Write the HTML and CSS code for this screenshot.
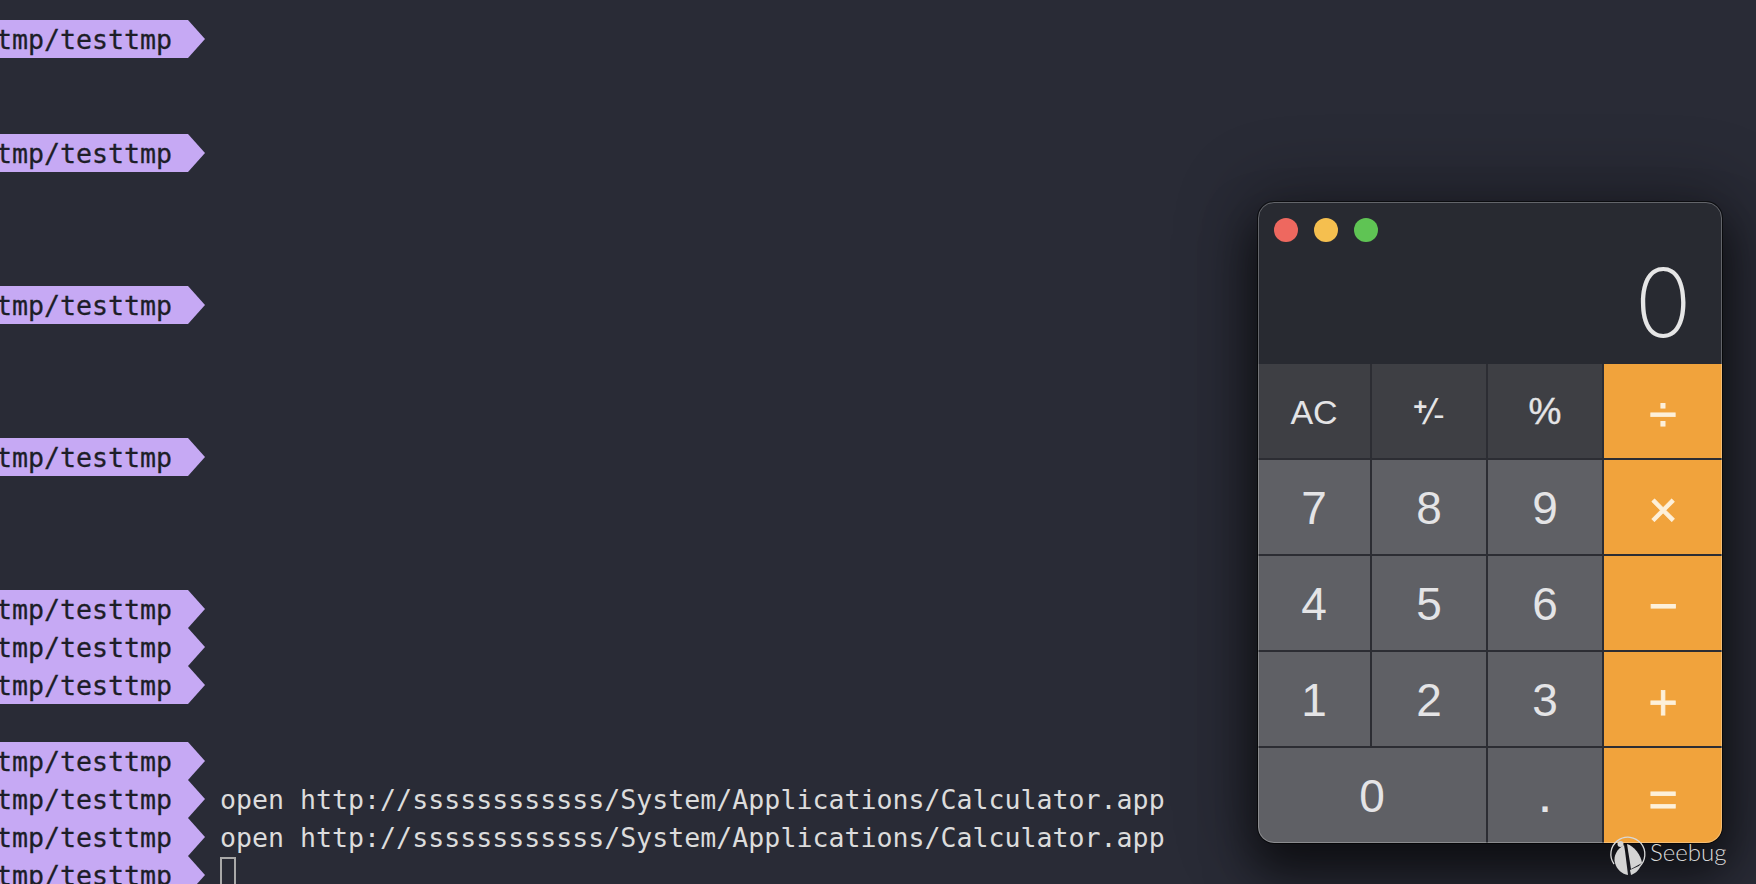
FILE: index.html
```html
<!DOCTYPE html>
<html lang="en">
<head>
<meta charset="utf-8">
<title>Terminal and Calculator</title>
<link rel="stylesheet" href="styles.css">
</head>
<body>
<main class="term">
  <div class="row"><span class="seg"><span class="path">tmp/testtmp</span></span></div>
  <div class="row"></div><div class="row"></div>
  <div class="row"><span class="seg"><span class="path">tmp/testtmp</span></span></div>
  <div class="row"></div><div class="row"></div><div class="row"></div>
  <div class="row"><span class="seg"><span class="path">tmp/testtmp</span></span></div>
  <div class="row"></div><div class="row"></div><div class="row"></div>
  <div class="row"><span class="seg"><span class="path">tmp/testtmp</span></span></div>
  <div class="row"></div><div class="row"></div><div class="row"></div>
  <div class="row"><span class="seg"><span class="path">tmp/testtmp</span></span></div>
  <div class="row"><span class="seg"><span class="path">tmp/testtmp</span></span></div>
  <div class="row"><span class="seg"><span class="path">tmp/testtmp</span></span></div>
  <div class="row"></div>
  <div class="row"><span class="seg"><span class="path">tmp/testtmp</span></span></div>
  <div class="row"><span class="seg"><span class="path">tmp/testtmp</span></span><span class="cmd">open http://ssssssssssss/System/Applications/Calculator.app</span></div>
  <div class="row"><span class="seg"><span class="path">tmp/testtmp</span></span><span class="cmd">open http://ssssssssssss/System/Applications/Calculator.app</span></div>
  <div class="row"><span class="seg"><span class="path">tmp/testtmp</span></span><span class="cursor"></span></div>
</main>

<section class="calc">
  <header class="calc-top">
    <div class="lights"><i class="light red"></i><i class="light yellow"></i><i class="light green"></i></div>
    <div class="display">0</div>
  </header>
  <div class="keys">
    <div class="key fn ac">AC</div>
    <div class="key fn sign"><span class="sup">+</span><span class="slash">/</span><span class="sub">-</span></div>
    <div class="key fn pct">%</div>
    <div class="key op">÷</div>
    <div class="key">7</div><div class="key">8</div><div class="key">9</div><div class="key op">×</div>
    <div class="key">4</div><div class="key">5</div><div class="key">6</div><div class="key op">−</div>
    <div class="key">1</div><div class="key">2</div><div class="key">3</div><div class="key op">+</div>
    <div class="key wide">0</div><div class="key dot">.</div><div class="key op">=</div>
  </div>
</section>

<div class="mark">
  <svg class="mark-logo" width="44" height="50" viewBox="0 0 44 50" aria-hidden="true">
    <path d="M33 37 A17 17 0 1 0 8 34" fill="none" stroke="#d8d8d8" stroke-width="1.3"/>
    <circle cx="14.5" cy="14" r="3" fill="#d4d4d4"/>
    <path d="M18 15 C11 19 7 26 9 33 C11 40 16 44 22 45 L19 21 Z" fill="#d4d4d4"/>
    <path d="M21 14 C28 16 35 25 36 33 L25 39 Z" fill="#d4d4d4"/>
    <path d="M24 40 L35 35 C33 41 28 44 25 45 Z" fill="#d4d4d4"/>
  </svg>
  <span class="mark-text">Seebug</span>
</div>
</body>
</html>
```
FILE: styles.css
```css
html, body {
  margin: 0;
  height: 884px;
  overflow: hidden;
  background: #292b36;
}
body {
  position: relative;
  font-family: "DejaVu Sans Mono", monospace;
}
.term {
  padding-top: 20px;
}
.row {
  display: flex;
  height: 38px;
  line-height: 40px;
  font-size: 26.6px;
  white-space: nowrap;
}
.seg {
  flex: none;
  width: 205px;
  margin-right: 15px;
  background: #c6a9f4;
  color: #1d1e27;
  -webkit-text-stroke: .3px #1d1e27;
  clip-path: polygon(0 0, 188px 0, 205px 50%, 188px 100%, 0 100%);
  overflow: hidden;
}
.path {
  display: block;
  margin-left: -4px;
}
.cmd {
  color: #dcdcdc;
}
.cursor {
  box-sizing: border-box;
  flex: none;
  width: 16px;
  height: 38px;
  margin-top: 1px;
  border: 2px solid #a9a9a9;
}

.calc {
  position: absolute;
  left: 1258px;
  top: 202px;
  width: 464px;
  height: 641px;
  display: flex;
  flex-direction: column;
  border-radius: 16px;
  overflow: hidden;
  background: #2c2d33;
  box-shadow: 0 0 0 1px rgba(0, 0, 0, .6), 0 26px 46px 6px rgba(0, 0, 0, .55), 0 0 70px 14px rgba(0, 0, 0, .28);
  font-family: "Liberation Sans", Arial, sans-serif;
}
.calc::after {
  content: "";
  position: absolute;
  inset: 0;
  border: 1px solid rgba(255, 255, 255, .28);
  border-radius: 16px;
  pointer-events: none;
}
.calc-top {
  flex: none;
  height: 162px;
  background: #282a31;
  display: flex;
  flex-direction: column;
}
.lights {
  display: flex;
  gap: 16px;
  padding: 16px 0 0 16px;
}
.light {
  width: 24px;
  height: 24px;
  border-radius: 50%;
}
.red { background: #ee685f; }
.yellow { background: #f5bf4f; }
.green { background: #5fc454; }
.display {
  margin-top: 8px;
  padding-right: 30px;
  text-align: right;
  color: #e6e6e6;
  font-family: Inter, sans-serif;
  font-size: 95px;
  font-weight: 200;
  line-height: 106px;
}
.keys {
  flex: 1;
  display: grid;
  grid-template-columns: 112px 114px 114px 118px;
  grid-template-rows: 94px 94px 94px 94px 95px;
  gap: 2px;
}
.key {
  display: flex;
  align-items: center;
  justify-content: center;
  background: #5f6065;
  color: #e4e4e6;
  font-size: 46px;
  padding-top: 1px;
}
.fn {
  background: #3e3f44;
}
.ac, .pct {
  font-size: 34px;
  padding-top: 2px;
}
.pct {
  font-size: 37px;
  -webkit-text-stroke: .4px #e4e4e6;
}
.sign {
  font-size: 36px;
}
.sign .sup {
  font-size: 24px;
  font-weight: 700;
  transform: translateY(-5px);
}
.sign .slash {
  margin: 0 -2px;
  transform: skewX(-14deg);
}
.sign .sub {
  font-size: 34px;
  transform: translateY(3px);
}
.op {
  background: #f1a33c;
  color: #fdf0da;
  font-size: 50px;
  -webkit-text-stroke: .8px #fdf0da;
  padding-top: 6px;
}
.wide {
  grid-column: span 2;
}
.dot {
  font-weight: 700;
  font-size: 36px;
  padding-top: 8px;
}

.mark {
  position: absolute;
  left: 1606px;
  top: 830px;
  display: flex;
  align-items: flex-start;
  gap: 0;
  color: #d8d8d8;
}
.mark-text {
  margin-top: 7px;
  font-family: Lato, sans-serif;
  font-size: 24px;
  font-weight: 300;
  line-height: 30px;
}
```
